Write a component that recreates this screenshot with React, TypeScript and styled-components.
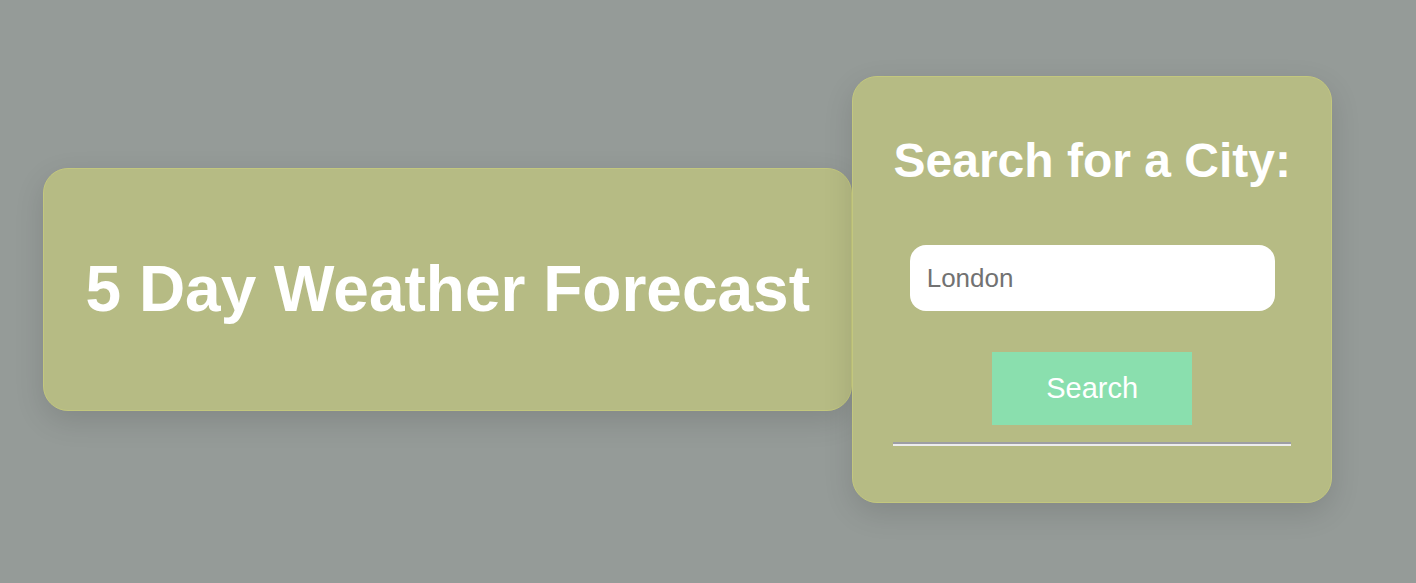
import styled, { createGlobalStyle } from 'styled-components'

const GlobalStyle = createGlobalStyle`
  html,
  body {
    margin: 0;
    padding: 0;
    background: #959b98;
    font-family: 'Liberation Sans', Arial, sans-serif;
  }
`

export default function App() {
  return (
    <>
      <GlobalStyle />
      <Page>
        <HeaderCard>
          <Title>5 Day Weather Forecast</Title>
        </HeaderCard>
        <SearchCard>
          <SearchTitle>Search for a City:</SearchTitle>
          <SearchForm onSubmit={e => e.preventDefault()}>
            <CityInput type={'text'} defaultValue={'London'} />
            <SearchButton type={'submit'}>Search</SearchButton>
          </SearchForm>
          <Divider />
        </SearchCard>
      </Page>
    </>
  )
}

//style
const Page = styled.main`
  display: flex;
  align-items: center;
  min-height: 579px;
  padding-left: 43px;
`

const Card = styled.section`
  box-sizing: border-box;
  background: #b6bb84;
  border: 1px solid #c3c77e;
  border-radius: 25px;
  box-shadow: 0 10px 30px rgba(0, 0, 0, 0.12);
`

const HeaderCard = styled(Card)`
  padding: 84px 41.5px;
`

const Title = styled.h1`
  margin: 0;
  font-size: 64px;
  line-height: 1.15;
  font-weight: 700;
  color: #fff;
  white-space: nowrap;
`

const SearchCard = styled(Card)`
  display: flex;
  flex-direction: column;
  align-items: center;
  padding: 56px 40px;
`

const SearchTitle = styled.h2`
  margin: 0;
  font-size: 48px;
  line-height: 55px;
  font-weight: 700;
  color: #fff;
  white-space: nowrap;
`

const SearchForm = styled.form`
  display: flex;
  flex-direction: column;
  align-items: center;
  width: 100%;
  padding-top: 57px;
  gap: 41px;
`

const CityInput = styled.input`
  box-sizing: border-box;
  width: 365px;
  height: 66px;
  padding: 0 17px;
  border: none;
  border-radius: 16px;
  background: #fff;
  font-family: 'Liberation Sans', Arial, sans-serif;
  font-size: 26px;
  color: #727272;
  outline: none;
`

const SearchButton = styled.button`
  width: 200px;
  height: 73px;
  border: none;
  background: #8adfae;
  color: #fff;
  font-family: 'Liberation Sans', Arial, sans-serif;
  font-size: 29px;
  cursor: pointer;
`

const Divider = styled.hr`
  box-sizing: border-box;
  width: 100%;
  height: 4px;
  margin: 17px 0 0;
  border: none;
  border-top: 2px solid #9d9ea3;
  border-bottom: 2px solid #ededed;
`
